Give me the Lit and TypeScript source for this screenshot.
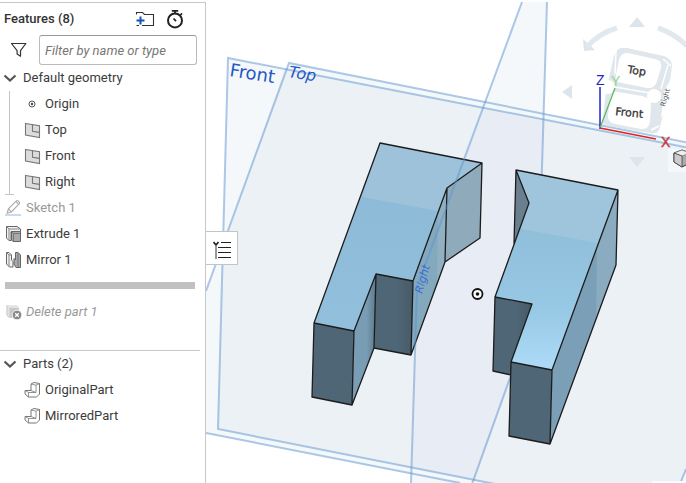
import { LitElement, html, svg, css } from "lit";
import { customElement, property } from "lit/decorators.js";

const icons: Record<string, unknown> = {
  origin: svg`<circle cx="8" cy="8" r="3" fill="none" stroke="#555"/><circle cx="8" cy="8" r="1.2" fill="#444"/>`,
  plane: svg`<path d="M1.500 1.500 15.500 3.600V15.600L1.500 13Z" fill="#dcdcdc" stroke="#777" stroke-width="1.100"/><path d="M8.500 2.600V9.200L15.500 10.400" fill="none" stroke="#777" stroke-width="1.100"/>`,
  sketch: svg`<path d="M2.2 13.2 3.4 8.9 11.6.7Q12.3.2 13 .9L14.4 2.3Q15 3 14.4 3.7L6.3 11.9ZM3.4 8.9 6.3 11.9M11 1.6 13.6 4.3" fill="none" stroke="#aaa" stroke-width="1.1"/><path d="M0 15H16" stroke="#a9c0e8" stroke-width="1.2"/>`,
  extrude: svg`<path d="M1.500.5H12L15.500 3V5.500H6V14.500H4L1.500 12Z" fill="#f2f2f2" stroke="#666"/><path d="M1.500.5 4 3H15.500M4 3V14.500" fill="none" stroke="#888"/><path d="M6.500 5.500H15.500V15.500H8L6.500 14Z" fill="#aaa" stroke="#666"/><path d="M6.500 5.500 8.500 7.500V15M8.500 7.500H15" fill="none" stroke="#777"/>`,
  mirror: svg`<path d="M1.500.5H4L6.500 3V8L8 9.500V15H4.500L1.500 12Z" fill="#f2f2f2" stroke="#666"/><path d="M1.500.5 4 3V14.500M4 3H6.500" fill="none" stroke="#888"/><path d="M15.500 3 13 .5H10.500V8L9 6.500V12L11 15.500H15.500Z" fill="#aaa" stroke="#666"/><path d="M13 .5V15" stroke="#777"/>`,
  remove: svg`<path d="M1.500 1.200H12L14 3.500V13.800H4L1.500 11Z" fill="#e2e2e2"/><path d="M4.500 4H14V13.800H4.500Z" fill="#c8c8c8"/><path d="M2 1.200V11L4 13.500" fill="none" stroke="#ccc"/><circle cx="12" cy="11" r="4.800" fill="#888" stroke="#fff" stroke-width=".8"/><path d="m10.200 9.200 3.600 3.600m0-3.600-3.600 3.600" stroke="#fff" stroke-width="1.300"/>`,
  part: svg`<path d="M1 8.500H7V2L10 .5 15.500 1.500V12L12.500 15H4.500L1 12Z" fill="#fff" stroke="#777"/><path d="M7 2 12 3.200 15.500 1.500M12 3.200V10.500H4.500L1 8.500M4.500 10.500V15M7 8.500 12 10.500" fill="none" stroke="#888" stroke-width=".9"/>`,
  chevron: svg`<path d="m2.500 5.500 5.500 5 5.500-5" fill="none" stroke="#555" stroke-width="2.200"/>`,
  filter: svg`<path d="M.5 1.500H14.900L9.500 8.600V14.200L6.100 12V8.600Z" fill="none" stroke="#333" stroke-width="1.200" stroke-linejoin="round"/>`,
};

@customElement("tree-icon")
class TreeIcon extends LitElement {
  @property() name = "";
  static styles = css`
    :host { display: block; flex: none; width: 16px; height: 16px; }
    .icon { display: block; width: 100%; height: 100%; overflow: visible; }
  `;
  render() {
    return html`<svg class="icon" viewBox="0 0 16 16" aria-hidden="true">${icons[this.name]}</svg>`;
  }
}

@customElement("feature-panel")
class FeaturePanel extends LitElement {
  static styles = css`
    :host {
      display: block; box-sizing: border-box; margin-top: 2px;
      border-top: 1px solid #c8c8c8; border-right: 1px solid #c8c8c8;
      background: #fff; color: #3c3c3c; font-size: 13px; line-height: 26px;
    }
    button { font: inherit; color: inherit; background: none; border: 0; padding: 0; }
    .head { display: flex; align-items: center; height: 32px; padding: 0 20px 0 4px; }
    .title { flex: 1; margin: 0; font-size: 13px; font-weight: 500; color: #333; }
    .tool { width: 20px; height: 20px; margin-left: 10px; }
    .tool svg { display: block; width: 20px; height: 20px; }
    .search { display: flex; align-items: center; gap: 12px; padding: 0 8px 0 11px; }
    .search input {
      flex: 1; min-width: 0; height: 30px; box-sizing: border-box; padding: 0 5px;
      border: 1px solid #bbb; border-top-color: #999; border-radius: 3px;
      font: italic 13px Roboto, sans-serif; color: #333;
    }
    .search input::placeholder { color: #777; opacity: 1; }
    .group { display: flex; align-items: center; gap: 5px; width: 100%; height: 26px; padding-left: 2px; text-align: left; }
    ul { list-style: none; margin: 0; padding: 0; }
    .row { display: flex; align-items: center; gap: 5px; height: 26px; padding-left: 5px; white-space: nowrap; }
    .nested .row { padding-left: 24px; }
    .geometry { position: relative; }
    .geometry::before {
      content: ""; position: absolute; left: 9px; top: 0; bottom: 1px; border-left: 1px solid #c4c4c4;
    }
    .geometry::after {
      content: ""; position: absolute; left: 5px; width: 9px; bottom: 0; border-top: 1px solid #c4c4c4;
    }
    .muted { color: #999; }
    .suppressed { color: #999; font-style: italic; }
    .rollback { height: 7px; margin: 9px 10px 10px 5px; background: #c1c1c1; }
    .parts { margin: 25px 5px 0 0; border-top: 1px solid #c8c8c8; }
  `;
  row(icon: string, label: string, cls = "") {
    return html`<li class="row ${cls}"><tree-icon name=${icon}></tree-icon><span>${label}</span></li>`;
  }
  render() {
    return html`
      <div class="head">
        <h2 class="title">Features (8)</h2>
        <button class="tool" aria-label="New folder"><svg viewBox="0 0 20 20">
          <path d="M1.500 5.500V3.500H7.500L9.500 5.500H18.500V16.500H7M1.500 16.500H4" fill="none" stroke="#333" stroke-width="1.100"/>
          <path d="M5.500 7.500V15.500M1.500 11.500H9.500" stroke="#1453b8" stroke-width="2"/></svg></button>
        <button class="tool" aria-label="Regeneration times"><svg viewBox="0 0 20 20">
          <circle cx="10" cy="11.4" r="7" fill="none" stroke="#222" stroke-width="2"/>
          <path d="M10 4.5V1.8M6.8 1.8H13.2M15.5 6 17 4.4M8.500 9.500 11 12.2" fill="none" stroke="#222" stroke-width="1.7"/></svg></button>
      </div>
      <div class="search">
        <tree-icon name="filter"></tree-icon>
        <input type="text" aria-label="Filter features" placeholder="Filter by name or type">
      </div>
      <button class="group" aria-expanded="true"><tree-icon name="chevron"></tree-icon>Default geometry</button>
      <ul class="nested geometry">
        ${this.row("origin", "Origin")} ${this.row("plane", "Top")}
        ${this.row("plane", "Front")} ${this.row("plane", "Right")}
      </ul>
      <ul>
        ${this.row("sketch", "Sketch 1", "muted")} ${this.row("extrude", "Extrude 1")}
        ${this.row("mirror", "Mirror 1")}
      </ul>
      <div class="rollback"></div>
      <ul>${this.row("remove", "Delete part 1", "suppressed")}</ul>
      <section class="parts">
        <button class="group" aria-expanded="true"><tree-icon name="chevron"></tree-icon>Parts (2)</button>
        <ul class="nested">${this.row("part", "OriginalPart")} ${this.row("part", "MirroredPart")}</ul>
      </section>
    `;
  }
}

@customElement("model-view")
class ModelView extends LitElement {
  static styles = css`
    :host { display: block; position: relative; margin-top: 2px; overflow: hidden; }
    .scene { position: absolute; inset: 0; width: 100%; height: 100%; }
    .edge { fill: none; stroke: #5e93d0; stroke-opacity: .5; stroke-width: 2; }
    .solid { stroke: #1c1c1c; stroke-width: 1.3; stroke-linejoin: round; }
    .outline { fill: none; }
    .dark { fill: #4f6676; }
    .plane-name { fill: #2458c4; font-family: "DejaVu Sans", sans-serif; }
    .engraved { fill: #2458d8; fill-opacity: .75; }
    .nav { fill: #dce5ec; }
    .arc { fill: none; stroke: #e1e8ee; stroke-width: 5; }
    .face-name { fill: #333; stroke: #333; stroke-width: .3px; font: 11px "DejaVu Sans", sans-serif; }
    .axis { font: 14px "Liberation Sans", sans-serif; }
    .toggle {
      position: absolute; left: -1px; top: 229px; width: 33px; height: 34px; padding: 0;
      border: 1px solid #c4c4c4; border-left-color: #fff; background: #fff;
    }
    .toggle svg { display: block; margin: 4px auto 0 7px; width: 18px; height: 20px; }
  `;
  planes() {
    return svg`
      <path d="M228 58 686 147V522L218 429Z" fill="#f4f8fb"/>
      <path d="M289 63 686 142V483H457L206 433V291Z" fill="#f4f8fb"/>
      <path d="M522 2H547L538 300 472 483H411L417 287Z" fill="#f4f8fb"/>
      <path d="M285 69 686 147V470L678 490H525L218 429 223 246Z" fill="#ecf1f5"/>
      <path d="M483 109 544 121 538 300 475 480 412 467 417 287Z" fill="#e8ecf4"/>
      <path class="edge" d="M700 150 228 58 218 429 500 485"/>
      <path class="edge" d="M700 145 289 63 206 291M206 433 460 483M686 469 680 484"/>
      <path class="edge" d="M547 2 541 200 538 300 472 484"/>
      <text class="plane-name" font-size="18" transform="translate(229 76) rotate(9)">Front</text>
      <text class="plane-name" font-size="16" font-style="italic" transform="translate(288 77) rotate(9)">Top</text>`;
  }
  original() {
    return svg`
      <path d="M380 143 482 163 447 188 413 281 376 274 354 331 314 323Z" fill="url(#topA)"/>
      <path d="M380 143 482 163 447 188 438 211 362 197Z" fill="#9dc2da"/>
      <path class="dark" d="M314 323 354 331 352 405 312 397Z"/>
      <path d="M354 331 376 274 374 348 352 405Z" fill="url(#notch)"/>
      <path d="M376 274 413 281 411 355 374 348Z" fill="url(#step)"/>
      <path d="M413 281 447 188 445 262 411 355Z" fill="#83a9bf"/>
      <path d="M438 213 447 188 445 262 437 286Z" fill="#91b0c2"/>
      <path d="M447 188 482 163 480 238 445 262Z" fill="#8faabb"/>
      <path class="solid outline" d="M380 143 482 163 447 188 413 281 376 274 354 331 314 323ZM314 323 312 397 352 405 354 331M376 274 374 348 411 355 413 281M352 405 374 348M447 188 445 262 411 355M482 163 480 238 445 262"/>`;
  }
  mirrored() {
    return svg`
      <path d="M516 170 618 190 552 370 511 362 532 304 495 297 529 203Z" fill="url(#topB)"/>
      <path d="M516 170 618 190 598 243 521 229 529 203Z" fill="#9fc5dd"/>
      <path d="M516 170 529 203 514 244Z" fill="#6b808e"/>
      <path d="M495 297 532 304 511 362V375L493 371Z" fill="url(#step)"/>
      <path class="dark" d="M511 362 552 370 550 444 509 436Z"/>
      <path d="M618 190 616 265 550 444 552 370Z" fill="#7a9fb7"/>
      <path d="M618 190 616 265 596 319 597 246Z" fill="#8aabc0"/>
      <path class="solid outline" d="M516 170 618 190 552 370 511 362 532 304 495 297 529 203ZM516 170 514 244M495 297 493 371 511 375M511 362 509 436 550 444 552 370M618 190 616 265 550 444"/>`;
  }
  cube() {
    return svg`
      <path class="nav" d="M637 17 645 27H629ZM562 92 572 85V99ZM629 157H645L637 167ZM583 39 584 51 595 50Z"/>
      <path class="arc" d="M617 28Q599 33 587 47M658 28Q674 33 687 46"/>
      <path d="M621 48Q625 47 631 49L664 56Q672 59 672 66L668 97 659 130Q656 135 650 133L607 126Q601 124 603 118L606 91 614 56Q616 49 621 48Z" fill="#dfe6ec"/>
      <path d="M616 51 615 74M663 59 671 66M609 86 650 93M651 130 659 126M661 89 668 65" fill="none" stroke="#fff" stroke-width="1.5"/>
      <path d="M628 53 655 59Q663 61 661 68L657 81Q655 89 647 88L622 83Q614 82 616 75L619 60Q621 52 628 53Z" fill="#fff"/>
      <path d="M618 92 642 96Q652 98 651 106L650 121Q649 130 641 129L615 124Q607 122 608 115L610 99Q611 91 618 92Z" fill="#fff"/>
      <path d="M670 80 668 108 661 118 664 92Z" fill="#fff"/>
      <circle cx="608" cy="87" r="7" fill="#fff"/><circle cx="654" cy="96" r="7" fill="#fff"/>
      <text class="face-name" transform="translate(627 73) rotate(9)" font-style="italic">Top</text>
      <text class="face-name" transform="translate(615 115) rotate(6)">Front</text>
      <text font-size="7" font-family="DejaVu Sans, sans-serif" fill="#555" transform="translate(665 107) rotate(-74)">Right</text>
      <path d="M600 129V87" stroke="#22c" stroke-width="1.5"/>
      <path d="M600 128 615 88" stroke="#5cb85c" stroke-width="1.3"/>
      <path d="M600 128 656 139" stroke="#d22" stroke-width="1.5"/>
      <text class="axis" x="596" y="85" fill="#22c">Z</text>
      <text class="axis" x="611" y="86" fill="#8fd68f">Y</text>
      <text class="axis" x="661" y="147" fill="#c33" stroke="#c33" stroke-width=".4">X</text>
      <path d="M668 149H686V172H668Z" fill="#f5f8fa"/>
      <path d="M674 153 682 150 690 153V163L682 167 674 162Z" fill="#aaa" stroke="#333"/>
      <path d="M674 153 682 150 690 153 682 156Z" fill="#eee" stroke="#666" stroke-width=".6"/>
      <path d="M674 153 682 156V167L674 162Z" fill="#ccc" stroke="#444" stroke-width=".8"/>`;
  }
  render() {
    return html`
      <svg class="scene" viewBox="206 2 480 481" preserveAspectRatio="xMinYMin slice" role="img" aria-label="3D model view">
        <defs>
          <linearGradient id="topA" x1="0" y1="0" x2="0" y2="1"><stop offset="0" stop-color="#8ab8d6"/><stop offset="1" stop-color="#92c0dc"/></linearGradient>
          <linearGradient id="topB" x1="0" y1="0" x2="0" y2="1"><stop offset=".3" stop-color="#90bfda"/><stop offset=".7" stop-color="#97c8e4"/><stop offset="1" stop-color="#aedcf8"/></linearGradient>
          <linearGradient id="notch"><stop offset=".6" stop-color="#789db4"/><stop offset="1" stop-color="#5d7a8c"/></linearGradient>
          <linearGradient id="step"><stop offset="0" stop-color="#4f6676"/><stop offset=".6" stop-color="#4f6676"/><stop offset="1" stop-color="#475a66"/></linearGradient>
        </defs>
        ${this.planes()} ${this.original()} ${this.mirrored()}
        <path class="edge" d="M522 2 417 287 411 484"/>
        <text class="plane-name engraved" font-size="11" font-style="italic" transform="translate(422 294) rotate(-74)">Right</text>
        <circle cx="477.5" cy="294" r="5" fill="#fff" stroke="#111" stroke-width="1.8"/>
        <circle cx="477.5" cy="294" r="1.8" fill="#111"/>
        ${this.cube()}
        <path d="M652 481H686V483H652Z" fill="#fbfcfd"/>
      </svg>
      <button class="toggle" aria-label="Toggle feature list"><svg viewBox="0 0 18 20">
        <path d="M.5 2 3 5 5.5 2" fill="none" stroke="#222" stroke-width="1.7"/>
        <path d="M3 6V19" stroke="#999" stroke-width="2"/>
        <path d="M8 2.5H18M5 7.5H18M5 12.5H18M5 17.5H18" stroke="#222" stroke-width="1.2"/></svg></button>
    `;
  }
}

@customElement("app-root")
class AppRoot extends LitElement {
  static styles = css`
    :host {
      display: grid; grid-template-columns: 206px 1fr; min-height: 100vh;
      background: #fff; font-family: Roboto, sans-serif;
    }
  `;
  render() {
    return html`<feature-panel></feature-panel><model-view></model-view>`;
  }
}
